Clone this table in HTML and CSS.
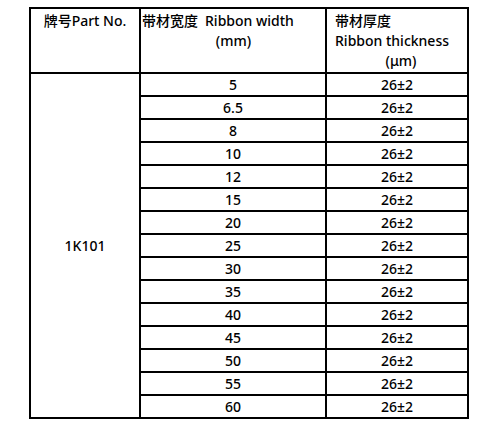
FILE: index.html
```html
<!DOCTYPE html>
<html lang="zh">
<head>
<meta charset="utf-8">
<title>1K101</title>
<link rel="stylesheet" href="styles.css">
</head>
<body>
<table class="spec">
  <colgroup>
    <col class="c1">
    <col class="c2">
    <col class="c3">
  </colgroup>
  <thead>
    <tr>
      <th class="h1">牌号Part No.</th>
      <th class="h2"><div class="left">带材宽度<span class="en">Ribbon width</span></div><div class="center">(mm)</div></th>
      <th class="h3"><div class="left">带材厚度</div><div class="left">Ribbon thickness</div><div class="center">(μm)</div></th>
    </tr>
  </thead>
  <tbody>
    <tr><td class="part" rowspan="15">1K101</td><td>5</td><td>26±2</td></tr>
    <tr><td>6.5</td><td>26±2</td></tr>
    <tr><td>8</td><td>26±2</td></tr>
    <tr><td>10</td><td>26±2</td></tr>
    <tr><td>12</td><td>26±2</td></tr>
    <tr><td>15</td><td>26±2</td></tr>
    <tr><td>20</td><td>26±2</td></tr>
    <tr><td>25</td><td>26±2</td></tr>
    <tr><td>30</td><td>26±2</td></tr>
    <tr><td>35</td><td>26±2</td></tr>
    <tr><td>40</td><td>26±2</td></tr>
    <tr><td>45</td><td>26±2</td></tr>
    <tr><td>50</td><td>26±2</td></tr>
    <tr><td>55</td><td>26±2</td></tr>
    <tr><td>60</td><td>26±2</td></tr>
  </tbody>
</table>
</body>
</html>
```

FILE: styles.css
```css
html, body {
  margin: 0;
  padding: 0;
  background: #fff;
}

body {
  font-family: "Noto Sans", "Noto Sans CJK SC", sans-serif;
  font-size: 14px;
  font-weight: 500;
  color: #000;
}

.spec {
  margin: 7px 0 0 29px;
  box-sizing: border-box;
  width: 440px;
  table-layout: fixed;
  border-collapse: separate;
  border-spacing: 0;
  border-top: 2px solid #000;
  border-left: 2px solid #000;
}

.c1 { width: 110px; }
.c2 { width: 186px; }
.c3 { width: 142px; }

.spec th,
.spec td {
  box-sizing: border-box;
  border-right: 2px solid #000;
  border-bottom: 2px solid #000;
  padding: 0;
  font-weight: 500;
  white-space: nowrap;
}

.spec th {
  vertical-align: top;
  line-height: 20px;
  padding-top: 2px;
  padding-bottom: 1px;
}

.spec .h1 {
  text-align: center;
}

.spec .h2 {
  padding-left: 1px;
}

.spec .h3 {
  padding-left: 8px;
}

.left {
  text-align: left;
}

.center {
  text-align: center;
}

.en {
  margin-left: 7px;
}

.spec td {
  line-height: 21px;
  text-align: center;
  vertical-align: middle;
}
```
